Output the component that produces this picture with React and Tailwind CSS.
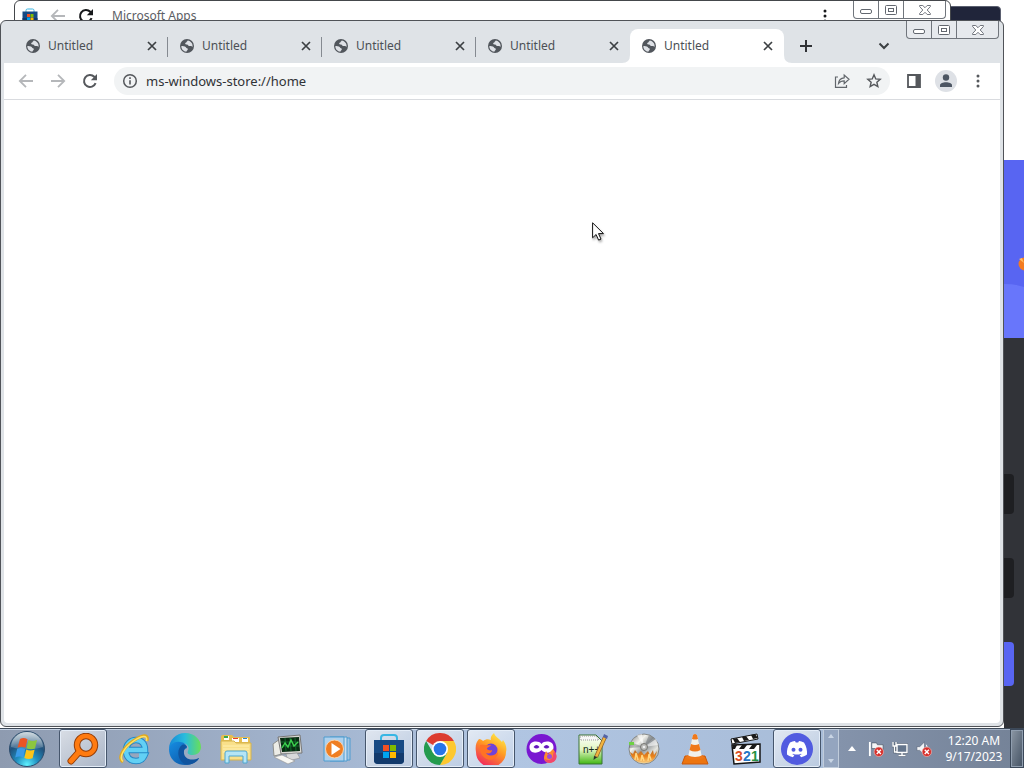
import React from "react";

const tabs = [1, 2, 3, 4, 5];

function Globe() {
  return (
    <svg viewBox="0 0 16 16" className="size-4 shrink-0" aria-hidden="true">
      <circle cx="8" cy="8" r="7" fill="#51565c" />
      <path d="M2.3 8.2c1.2-.2 2.6 0 3.6.4 1.4.5 1 1.6 2.1 1.7.9.1 1.1 1 .5 1.7-.7.8-1.1 1.1-1.2 1.7C4.5 13.4 2.3 11 2.3 8.2z" fill="#dee1e6" />
      <path d="M8.700 2.400c-.2 1-1.300 1.200-1.500 2.100-.1.700-1.100.5-1.100 1.300 0 .7 1 .6 1.900.7 1.200.1 1 1.400 2.200 1.600.9.1 1.600-.3 2.100 0 .5.300.8.700 1.300.6.3-3.200-1.700-5.700-4.900-6.300z" fill="#dee1e6" />
    </svg>
  );
}

function Arrow({ flip }) {
  return (
    <svg viewBox="0 0 16 16" className={flip ? "size-4 rotate-180" : "size-4"} fill="none" stroke="#b5b7ba" strokeWidth="1.8" aria-hidden="true">
      <path d="M15 8H2M8 1.8 1.8 8 8 14.2" />
    </svg>
  );
}

function Reload({ color }) {
  return (
    <svg viewBox="0 0 16 16" className="size-4" aria-hidden="true">
      <path d="M13.6 10.2A6 6 0 1 1 12.3 3.8L14 5.4" fill="none" stroke={color} strokeWidth="2" />
      <path d="M15 1v6.2H8.8z" fill={color} />
    </svg>
  );
}

function Dots({ color }) {
  return (
    <svg viewBox="0 0 16 16" className="size-4" fill={color} aria-hidden="true">
      <circle cx="8" cy="3" r="1.5" />
      <circle cx="8" cy="8" r="1.5" />
      <circle cx="8" cy="13" r="1.5" />
    </svg>
  );
}

function Cross() {
  return (
    <svg viewBox="0 0 10 10" className="size-2.5" stroke="#3c4043" strokeWidth="1.7" aria-hidden="true">
      <path d="m1 1 8 8M9 1 1 9" />
    </svg>
  );
}

function Caption({ tint }) {
  return (
    <div className={`flex h-[18px] shrink-0 divide-x divide-[#70757c] rounded-b border border-t-0 border-[#70757c] ${tint}`}>
      <button aria-label="Minimize" className="flex w-[25px] items-center justify-center pt-1">
        <svg viewBox="0 0 12 5" className="h-[5px] w-3" aria-hidden="true">
          <rect x=".5" y=".5" width="11" height="4" rx="1.5" fill="#fff" stroke="#62676f" />
        </svg>
      </button>
      <button aria-label="Maximize" className="flex w-[25px] items-center justify-center">
        <svg viewBox="0 0 12 10" className="h-2.5 w-3" fill="#fff" stroke="#62676f" aria-hidden="true">
          <rect x=".5" y=".5" width="11" height="9" rx="1" />
          <rect x="3.5" y="3.5" width="5" height="3" />
        </svg>
      </button>
      <button aria-label="Close" className="flex w-[41px] items-center justify-center">
        <svg viewBox="0 0 12 10" className="h-2.5 w-3" fill="#fff" stroke="#62676f" strokeWidth=".9" aria-hidden="true">
          <path d="M.6.5h3.2L6 2.7 8.2.5h3.2v1L8.2 5l3.2 3.5v1H8.2L6 7.3 3.8 9.5H.6v-1L3.8 5 .6 1.5z" />
        </svg>
      </button>
    </div>
  );
}

function StoreIcon({ className }) {
  return (
    <svg viewBox="0 0 32 32" className={className} aria-hidden="true">
      <path d="M8 8V5q0-3 3-3h10q3 0 3 3v3" fill="none" stroke="#38b6e4" strokeWidth="2" />
      <path d="M1 7h30v20q0 4-4 4H5q-4 0-4-4z" fill="#174a84" />
      <path d="M1 20h30v7q0 4-4 4H5q-4 0-4-4z" fill="#123a6c" />
      <path d="M10 12h6v6h-6z" fill="#f25022" />
      <path d="M17 12h6v6h-6z" fill="#7fba00" />
      <path d="M10 19h6v6h-6z" fill="#00a4ef" />
      <path d="M17 19h6v6h-6z" fill="#ffb900" />
    </svg>
  );
}

function StartOrb() {
  return (
    <svg viewBox="0 0 40 40" className="size-10" aria-hidden="true">
      <defs>
        <radialGradient id="orb" cx=".5" cy=".95" r=".9">
          <stop offset="0" stopColor="#5ff2ff" />
          <stop offset=".35" stopColor="#218fc0" />
          <stop offset=".7" stopColor="#20527d" />
          <stop offset="1" stopColor="#5d8097" />
        </radialGradient>
        <linearGradient id="orbShine" x2="0" y2="1">
          <stop offset="0" stopColor="#fff" stopOpacity=".7" />
          <stop offset="1" stopColor="#fff" stopOpacity=".15" />
        </linearGradient>
      </defs>
      <circle cx="20" cy="20" r="17.5" fill="url(#orb)" stroke="#2c4c6d" />
      <path d="M4 18a16 15 0 0 1 32 0c-9 3-22 3-32 0z" fill="url(#orbShine)" />
      <path d="M13 10c3-1.500 5-1 7.500.3l-2 8.500c-3-1.400-5-1.500-8-.1z" fill="#ea5524" />
      <path d="M21.500 11c2.500 1.200 5 1.300 8.500 0l-2 8.500c-3 1.200-5.500 1-8.500-.2z" fill="#8cc63f" />
      <path d="M10.200 19.800c2.600-1.300 5-1.100 8 .2l-2 8.500c-2.500-1.300-5-1.300-8 0z" fill="#3a9be8" />
      <path d="M19.300 20.500c2.500 1.200 5 1.300 8.300.2l-2 8.500c-3 1.100-5.500 1-8.300-.3z" fill="#fcc419" />
    </svg>
  );
}

function SearchIcon() {
  return (
    <svg viewBox="0 0 32 32" className="size-8" fill="none" aria-hidden="true">
      <circle cx="19" cy="12" r="9" stroke="#933d08" strokeWidth="6.500" />
      <path d="m12 19-8 9" stroke="#933d08" strokeWidth="7" strokeLinecap="round" />
      <circle cx="19" cy="12" r="9" stroke="#ff7b10" strokeWidth="4.500" />
      <path d="m12 19-8 9" stroke="#ff7b10" strokeWidth="5" strokeLinecap="round" />
    </svg>
  );
}

function ExplorerE() {
  return (
    <svg viewBox="0 0 32 32" className="size-8" fill="none" aria-hidden="true">
      <path d="M9 17h18c0-7-4-10-9-10S8 11 8 17.500 12 28 18 28c4 0 7-2 8.500-5.500H21" stroke="#2588c6" strokeWidth="6.500" />
      <path d="M9 17h18c0-7-4-10-9-10S8 11 8 17.500 12 28 18 28c4 0 7-2 8.500-5.500H21" stroke="#62d0f4" strokeWidth="4.500" />
      <path d="M5 29C-1 25 6 14 15 8S31 0 29 8" stroke="#e3a91d" strokeWidth="3" />
      <path d="M5 28.500C0 24 7 14 15 8.500S30 1 28.500 8" stroke="#fbe36b" strokeWidth="1.500" />
    </svg>
  );
}

function EdgeIcon() {
  return (
    <svg viewBox="0 0 32 32" className="size-8" aria-hidden="true">
      <defs>
        <linearGradient id="edgeTop"><stop stopColor="#1688d8" /><stop offset=".5" stopColor="#29bcdd" /><stop offset="1" stopColor="#69df59" /></linearGradient>
        <linearGradient id="edgeBase" x2="1" y2="1"><stop stopColor="#168de2" /><stop offset="1" stopColor="#0b4d9c" /></linearGradient>
      </defs>
      <path d="M0 16C0 7 7 0 16 0c10 0 16 7 16 14 0 5-4 8-8 8-5 0-6-2-5-4 2-4-1-8-6-8C6 10 1 13 0 16z" fill="url(#edgeTop)" />
      <path d="M0 16c1-5 6-8 11-7 4 0 7 3 7 6-5 1-5 9 1 12 4 2 8 0 11-2-3 5-8 7-14 7C6 32 0 25 0 16z" fill="url(#edgeBase)" />
      <path d="M13 12c-6 4-5 17 5 19.800C27 31 30 26 30 25c-9 4-16 0-15-7 0-2 1-3 3-4-1-2-3-3-5-2z" fill="#10549f" />
    </svg>
  );
}

function FolderIcon() {
  return (
    <svg viewBox="0 0 32 32" className="size-8" aria-hidden="true">
      <path d="M1 4q0-2 2-2h9l2 2h16v7H1z" fill="#e6bd50" />
      <path d="M4 3h5v4H4zM12 5h7v4h-7zM22 5h6v4h-6z" fill="#fff" />
      <path d="M4 3h4v2H4z" fill="#38a64b" /><path d="M13 5h5v1h-5z" fill="#e23c2e" /><path d="M23 5h4v1h-4z" fill="#2c87cc" />
      <path d="M1 8h13l2 2h15v17H1z" fill="#f9e08a" stroke="#d5b34d" />
      <path d="M3 13h26M3 16h26M3 19h26" stroke="#fff1b1" />
      <path d="M5 30V20q0-2 2-2h18q2 0 2 2v10h-4v-7H9v7z" fill="#b5e5f5" stroke="#4ea6d0" />
    </svg>
  );
}

function MonitorIcon() {
  return (
    <svg viewBox="0 0 32 32" className="size-8" aria-hidden="true">
      <path d="m2 11 7-5 2 15-8 2z" fill="#ecece6" stroke="#8d8f8b" />
      <path d="m7 4 22-2 2 18-21 1z" fill="#d8d8d3" stroke="#777" />
      <path d="m9 5 19-1 1 14-18 1z" fill="#092d13" />
      <path d="M10 9h18M10 13h18M14 5l1 13M19 5l1 13M24 5l1 13" stroke="#177733" strokeWidth=".8" />
      <path d="m11 15 3-5 3 4 3-7 3 6 4-4" fill="none" stroke="#3cd24e" strokeWidth="1.400" />
      <path d="m15 21 11-1 3 5-12 3z" fill="#d7d9da" stroke="#8d8f91" strokeWidth=".6" />
      <path d="m3 24 8-2 13 6-7 3z" fill="#f7f7f3" stroke="#999" strokeWidth=".7" />
    </svg>
  );
}

function MediaIcon() {
  return (
    <svg viewBox="0 0 32 32" className="size-8" aria-hidden="true">
      <path d="M12 5h16v22H12z" fill="#9fc4e3" stroke="#4f9ccf" />
      <path d="M8 4h17v24H8z" fill="#c9def0" stroke="#4f9ccf" />
      <path d="M2 4h20v24H2z" fill="#aed1ed" stroke="#4f9ccf" />
      <circle cx="12.500" cy="16" r="9" fill="#ef7e22" stroke="#f9d3ae" />
      <path d="M9.500 10v12l9-6z" fill="#fff" />
    </svg>
  );
}

function ChromeIcon() {
  return (
    <svg viewBox="0 0 32 32" className="size-8" aria-hidden="true">
      <path d="M16 16 2.140 8A16 16 0 0 1 29.860 8z" fill="#dc3c30" />
      <path d="M16 16V8h13.860A16 16 0 0 1 16 32l7-12z" fill="#fdc82f" />
      <path d="M16 16l-6.900 4L2.140 8A16 16 0 0 0 16 32l7-12z" fill="#249b4d" />
      <circle cx="16" cy="16" r="8" fill="#fff" /><circle cx="16" cy="16" r="6.300" fill="#2875e8" />
    </svg>
  );
}

function FirefoxIcon() {
  return (
    <svg viewBox="0 0 32 32" className="size-8" aria-hidden="true">
      <defs><linearGradient id="fox" x1=".8" y1="0" x2=".25" y2="1"><stop stopColor="#fff04a" /><stop offset=".45" stopColor="#ff9a22" /><stop offset="1" stopColor="#f0215f" /></linearGradient></defs>
      <path d="M4 6c2 0 3 1 4 2 3-2 5-2 8-1-1-3 1-5 3-7 1 4 5 5 8 9l1-2c3 4 4 8 3 12a15 15 0 0 1-30 0C0 14 1 9 4 6z" fill="url(#fox)" />
      <circle cx="16" cy="17" r="6.500" fill="#7042d8" />
      <path d="M5 12c4-1 6 1 11 0-1 2-4 2-4 4 1 1 3 2 5 1 0 3-3 4-6 3 3 4 9 3 12-1 0 7-8 10-13 6-4-3-6-8-5-13z" fill="#ff7224" />
    </svg>
  );
}

function MaskIcon() {
  return (
    <svg viewBox="0 0 32 32" className="size-8" aria-hidden="true">
      <circle cx="15.500" cy="16" r="15" fill="#7917d1" />
      <path d="M15.500 11c3-4 12-3 12 3 0 7-8 7-12 3-4 4-12 4-12-3 0-6 9-7 12-3z" fill="#fff" />
      <path d="M7.500 14q3-4 6 0-3 3-6 0m10 0q3-4 6 0-3 3-6 0" fill="#6518bd" />
      <path d="M20 18l2 3 5-5c3 4 4 6 3 9-2 7-12 6-12 0 0-3 1-4 2-7z" fill="#ff8a30" />
      <path d="M28 18c5 5 2 12-4 12-3 0-5-2-5-4 3 2 8 1 8-4z" fill="#f2476f" /><circle cx="23.500" cy="23.500" r="2.500" fill="#a34bd3" />
    </svg>
  );
}

function NotepadIcon() {
  return (
    <svg viewBox="0 0 32 32" className="size-8" aria-hidden="true">
      <defs><linearGradient id="note" x2="0" y2="1"><stop stopColor="#fff" /><stop offset=".5" stopColor="#e1f5c1" /><stop offset="1" stopColor="#42b714" /></linearGradient></defs>
      <path d="M2 2h17l6 6v23H2z" fill="url(#note)" stroke="#397334" />
      <path d="M3 3h16l3 4H3z" fill="#f7f7f7" stroke="#999" strokeDasharray="1 1" />
      <text x="6" y="20" fontFamily="Liberation Sans, sans-serif" fontSize="10" fill="#142c1b">n++</text>
      <path d="M28 4 19 24" stroke="#8e612d" strokeWidth="4" /><path d="M28 4 19 24" stroke="#f1b43f" strokeWidth="2.500" />
      <path d="m27 1 4 2-1 3-4-2z" fill="#5363a6" /><path d="m17 23-.5 4 4-3z" fill="#293328" />
    </svg>
  );
}

function DiscIcon() {
  return (
    <svg viewBox="0 0 32 32" className="size-8" aria-hidden="true">
      <defs>
        <linearGradient id="disc" x2="1" y2="1"><stop stopColor="#777" /><stop offset=".3" stopColor="#f2f2ec" /><stop offset=".5" stopColor="#91969a" /><stop offset=".7" stopColor="#e5e5df" /><stop offset="1" stopColor="#7e7662" /></linearGradient>
        <linearGradient id="flame" x2="0" y2="1"><stop stopColor="#b86b28" /><stop offset=".5" stopColor="#ec831a" /><stop offset="1" stopColor="#f7cf83" /></linearGradient>
      </defs>
      <circle cx="16" cy="16" r="15" fill="url(#disc)" stroke="#858989" />
      <path d="m16 14-7-12 5-1zM16 14 28 6l2 6z" fill="#fff" opacity=".6" />
      <path d="m16 14-15 1 1-6zM16 14l5-12 5 3z" fill="#5d6266" opacity=".4" />
      <path d="M2 19l3 2 2-4 3 4 3-3 3 4 4-4 2 4 3-5 1 5 3-4C27 27 24 30 16 30S4 26 2 19z" fill="url(#flame)" />
      <path d="m7 27 1-7 2 7m3 1 1-6 2 6m4 0 1-7 2 6" fill="none" stroke="#ffd681" strokeWidth="1.500" />
      <circle cx="16" cy="14" r="3.500" fill="#b9bab7" stroke="#777672" /><circle cx="16" cy="14" r="1.300" fill="#eee" />
      <path d="M1 9h5v3H1z" fill="#6ed143" />
    </svg>
  );
}

function ConeIcon() {
  return (
    <svg viewBox="0 0 32 32" className="size-8" aria-hidden="true">
      <path d="M6 23h20l3 8H3z" fill="#ed750f" stroke="#c9590d" />
      <path d="M14 2q2-2 4 0l5 22q-7 4-14 0z" fill="#f1f0eb" />
      <path d="M14 2q2-2 4 0l1 4q-3 1-6 0zM12 11q4 2 8 0l1.500 6q-5.500 3-11 0zM8 22q8 4 16 0l1 3q-9 4-18 0z" fill="#ef781a" />
    </svg>
  );
}

function ClapperIcon() {
  return (
    <svg viewBox="0 0 32 32" className="size-8" aria-hidden="true">
      <path d="m1 6 26-5 1 5L2 11z" fill="#fff" stroke="#151515" />
      <path d="m3 6 4-1 3 4-5 1zm9-2 4-1 3 4-5 1zm9-2 4-1 3 4-5 1z" fill="#191919" />
      <path d="m2 12 28-1v18L4 31z" fill="#fff" stroke="#151515" strokeWidth="1.500" />
      <path d="m3 12 4 0-2 4H3zm9 0h5l-3 4h-5zm10 0h5l-3 4h-5z" fill="#191919" />
      <g fontFamily="Liberation Sans, sans-serif" fontWeight="700" fontSize="14">
        <text x="5" y="28" fill="#dc4f24">3</text><text x="13" y="28" fill="#2475c5">2</text><text x="21" y="28" fill="#259245">1</text>
      </g>
    </svg>
  );
}

function DiscordIcon() {
  return (
    <svg viewBox="0 0 32 32" className="size-8" aria-hidden="true">
      <circle cx="16" cy="16" r="16" fill="#515be0" />
      <path d="M9 9.500c2-1 3-1.400 5-1.600l.8 1.500h2.400l.8-1.500c2 .2 3 .6 5 1.600 2.500 4 3.300 8 3 12-2 1.500-4 2.300-6 2.800l-1.400-2.200q1-.3 2-.9l-.6-.5q-4 1.700-8 0l-.6.500q1 .6 2 .9L12 24.300c-2-.5-4-1.300-6-2.800-.3-4 .5-8 3-12z" fill="#fff" />
      <circle cx="12.500" cy="16.800" r="2" fill="#515be0" /><circle cx="19.500" cy="16.800" r="2" fill="#515be0" />
    </svg>
  );
}

const apps = [
  { name: "Search", Icon: SearchIcon, open: true },
  { name: "Internet Explorer", Icon: ExplorerE },
  { name: "Edge", Icon: EdgeIcon },
  { name: "Files", Icon: FolderIcon },
  { name: "System monitor", Icon: MonitorIcon },
  { name: "Media player", Icon: MediaIcon },
  { name: "Store", Icon: () => <StoreIcon className="size-8" />, open: true },
  { name: "Chrome", Icon: ChromeIcon, open: true },
  { name: "Firefox", Icon: FirefoxIcon, open: true },
  { name: "Private browser", Icon: MaskIcon },
  { name: "Notepad++", Icon: NotepadIcon },
  { name: "Disc burner", Icon: DiscIcon },
  { name: "VLC", Icon: ConeIcon },
  { name: "Media player classic", Icon: ClapperIcon },
  { name: "Discord", Icon: DiscordIcon, open: true },
];

function StoreWindow() {
  return (
    <section className="absolute top-0 right-[73px] left-3.5 h-40 rounded-t-md border border-[#44474b] bg-white">
      <div className="flex items-start">
        <div className="flex h-[30px] flex-1 items-center pl-[7px]">
          <StoreIcon className="size-4" />
          <button aria-label="Back" className="ml-3 flex size-4"><Arrow /></button>
          <button aria-label="Reload" className="ml-3 flex size-4"><Reload color="#17191b" /></button>
          <span className="ml-[18px] text-[12px] leading-4 text-[#5c6065]">Microsoft Apps</span>
        </div>
        <button aria-label="Menu" className="mt-[7px] mr-5 flex size-4"><Dots color="#17191b" /></button>
        <div className="mr-1"><Caption tint="bg-white" /></div>
      </div>
    </section>
  );
}

function Tab({ active, divided }) {
  return (
    <div className={`relative flex h-[34px] w-[154px] items-center pl-[11px] ${active ? "rounded-t-lg bg-white" : ""}`}>
      {divided && <span className="absolute top-2 right-0 h-5 w-px bg-[#858a91]" />}
      {active && (
        <>
          <svg viewBox="0 0 8 8" className="absolute bottom-0 -left-2 size-2" aria-hidden="true"><path d="M8 0v8H0q8 0 8-8" fill="#fff" /></svg>
          <svg viewBox="0 0 8 8" className="absolute -right-2 bottom-0 size-2" aria-hidden="true"><path d="M0 0v8h8Q0 8 0 0" fill="#fff" /></svg>
        </>
      )}
      <Globe />
      <button className="ml-[7px] flex-1 text-left text-[12px] leading-4 text-[#4c5055]">Untitled</button>
      <button aria-label="Close tab" className="mr-2 flex size-4 items-center justify-center"><Cross /></button>
    </div>
  );
}

function BrowserWindow() {
  return (
    <section className="absolute top-5 right-5 bottom-px left-0 flex flex-col rounded-md border border-[#505358] bg-[#dfe3e7] px-[3px] pb-[3px]">
      <header className="flex h-[42px] items-start">
        <div className="flex self-end pl-2.5">
          {tabs.map((id, i) => <Tab key={id} active={i === 4} divided={i < 3} />)}
        </div>
        <button aria-label="New tab" className="mb-[9px] ml-3.5 flex size-4 items-center justify-center self-end">
          <svg viewBox="0 0 12 12" className="size-3" stroke="#303236" strokeWidth="2" aria-hidden="true"><path d="M6 0v12M0 6h12" /></svg>
        </button>
        <div className="flex-1" />
        <button aria-label="Search tabs" className="mr-3.5 mb-[9px] flex size-4 items-center justify-center self-end">
          <svg viewBox="0 0 12 12" className="size-3" fill="none" stroke="#3c4043" strokeWidth="2" aria-hidden="true"><path d="m1.500 3.500 4.500 4.500 4.500-4.500" /></svg>
        </button>
        <div className="mr-px"><Caption tint="bg-[#e6e9ed]" /></div>
      </header>
      <div className="flex h-[37px] items-center border-b border-[#d9dbdf] bg-white px-1.5">
        <button aria-label="Back" className="flex size-8 items-center justify-center"><Arrow /></button>
        <button aria-label="Forward" className="flex size-8 items-center justify-center"><Arrow flip /></button>
        <button aria-label="Reload" className="flex size-8 items-center justify-center"><Reload color="#55585c" /></button>
        <div className="ml-2 flex h-7 flex-1 items-center rounded-full bg-[#f1f3f4]">
          <button aria-label="Site information" className="flex w-8 justify-center">
            <svg viewBox="0 0 16 16" className="size-4" aria-hidden="true"><circle cx="8" cy="8" r="6.300" fill="none" stroke="#55585c" strokeWidth="1.500" /><path d="M7.200 7.200h1.600v4.300H7.200zM7.200 4.300h1.600v1.700H7.200z" fill="#55585c" /></svg>
          </button>
          <input aria-label="Address" defaultValue="ms-windows-store://home" className="min-w-0 flex-1 bg-transparent text-[13px] leading-5 text-[#303236] outline-none" />
          <button aria-label="Share" className="flex w-8 justify-center">
            <svg viewBox="0 0 16 16" className="size-4" fill="none" stroke="#62666b" strokeWidth="1.200" aria-hidden="true"><path d="M4 4H1.500v10.300h11V12M4.500 10.500c.3-3.500 2.500-5.500 5.700-5.700V2l4.800 4.300-4.800 4.300V7.800c-2.600 0-4.400.9-5.700 2.700z" /></svg>
          </button>
          <button aria-label="Bookmark" className="flex w-8 justify-center">
            <svg viewBox="0 0 16 16" className="size-4" fill="none" stroke="#55585c" strokeWidth="1.400" aria-hidden="true"><path d="m8 1.800 1.750 4.100 4.450.4-3.350 2.950 1 4.350L8 11.300l-3.850 2.300 1-4.350L1.800 6.300l4.450-.4z" /></svg>
          </button>
        </div>
        <button aria-label="Side panel" className="ml-2 flex w-8 justify-center">
          <svg viewBox="0 0 16 16" className="size-4" aria-hidden="true"><path d="M2 2h12v12H2z" fill="none" stroke="#55585c" strokeWidth="1.800" /><path d="M9.500 2H14v12H9.500z" fill="#55585c" /></svg>
        </button>
        <button aria-label="Profile" className="flex w-8 justify-center">
          <svg viewBox="0 0 22 22" className="size-[22px]" aria-hidden="true"><circle cx="11" cy="11" r="11" fill="#dee1e6" /><circle cx="11" cy="7.500" r="3.200" fill="#4d5663" /><path d="M5 17v-1.700c0-4 12-4 12 0V17z" fill="#4d5663" /></svg>
        </button>
        <button aria-label="Menu" className="flex w-8 justify-center"><Dots color="#55585c" /></button>
      </div>
      <main className="flex-1 rounded-b-sm bg-white" />
    </section>
  );
}

function DiscordPage() {
  return (
    <aside className="absolute inset-y-0 right-0 flex w-5 flex-col bg-[#313338]">
      <div className="h-40 bg-white" />
      <svg viewBox="0 0 20 178" className="h-[178px] w-5" aria-hidden="true">
        <path d="M0 0h20v178H0z" fill="#5865f2" /><path d="M0 124q12 0 20 3v51H0z" fill="#6876fb" />
        <circle cx="21" cy="104" r="6.500" fill="#f47b20" /><path d="m15 99 5 4-2-5z" fill="#ffbd61" />
      </svg>
      <div className="mt-[136px] mr-2.5 h-10 rounded-r bg-[#1e1f22]" />
      <div className="mt-11 mr-2.5 h-10 rounded-r bg-[#1e1f22]" />
      <div className="mt-11 mr-2.5 h-11 rounded-r bg-[#5865f2]" />
    </aside>
  );
}

function Badge() {
  return (
    <g>
      <circle cx="11.500" cy="11.500" r="5" fill="#d72f2b" stroke="#f2bab5" strokeWidth=".7" />
      <path d="m9.300 9.300 4.400 4.400m0-4.400-4.400 4.400" stroke="#fff" strokeWidth="1.500" />
    </g>
  );
}

function Taskbar() {
  return (
    <footer className="flex h-10 shrink-0 items-stretch border-t border-[#3d4958] bg-linear-to-r from-[#8e9bb0] via-[#b0c5e2] to-[#a3b7d2] shadow-[inset_0_1px_0_#c5d2e3]">
      <button aria-label="Start" className="flex w-[59px] items-center pl-[7px]"><StartOrb /></button>
      <nav className="flex gap-[3px]">
        {apps.map(({ name, Icon, open }) => (
          <button key={name} aria-label={name} className={`flex w-12 items-center justify-center rounded-[3px] border ${open ? "border-[#46566c] bg-linear-to-br from-white/65 to-white/20 shadow-[inset_0_0_0_1px_#e4edf8]" : "border-transparent"}`}>
            <Icon />
          </button>
        ))}
      </nav>
      <button aria-label="Scroll applications" className="ml-0.5 flex w-4 flex-col items-center justify-between border border-[#c0ccdb] bg-[#94a5bf] py-1">
        <svg viewBox="0 0 6 4" className="h-1 w-1.5" aria-hidden="true"><path d="M0 4h6L3 0z" fill="#c9d5e4" /></svg>
        <svg viewBox="0 0 6 4" className="h-1 w-1.5" aria-hidden="true"><path d="M0 0h6L3 4z" fill="#c9d5e4" /></svg>
      </button>
      <div className="flex flex-1 bg-linear-to-r from-[#8493ab] to-[#748297] shadow-[inset_0_1px_0_#a4b2c5]">
        <div className="flex flex-1 items-center justify-end gap-2 pr-1.5">
          <button aria-label="Show hidden icons"><svg viewBox="0 0 8 5" className="h-[5px] w-2" aria-hidden="true"><path d="M0 5h8L4 0z" fill="#fff" /></svg></button>
          <button aria-label="Action center" className="ml-1"><svg viewBox="0 0 17 17" className="size-4" aria-hidden="true"><path d="M2 1v15" stroke="#fff" strokeWidth="2" /><path d="M4 2h5l1 2h6v6H9L8 8H4z" fill="#f4f6f8" stroke="#3d4958" strokeWidth=".6" /><Badge /></svg></button>
          <button aria-label="Network"><svg viewBox="0 0 16 16" className="size-4" fill="none" aria-hidden="true"><path d="M5 3.500h10v8H5zM10 12v2M6.500 14.500h7M1 1v4h3V1M2.500 5v6H5" stroke="#4b586a" strokeWidth="2.500" /><path d="M5 3.500h10v8H5z" fill="#64758c" /><path d="M5 3.500h10v8H5zM10 12v2M6.500 14.500h7M1 1v4h3V1M2.500 5v6H5" stroke="#fff" strokeWidth="1.400" /></svg></button>
          <button aria-label="Volume muted"><svg viewBox="0 0 17 17" className="size-4" aria-hidden="true"><path d="M1 6h3l5-5v14l-5-5H1z" fill="#f3f5f7" stroke="#536176" strokeWidth=".6" /><path d="M11 4q2 3 0 7" fill="none" stroke="#fff" /><Badge /></svg></button>
        </div>
        <div className="flex w-[72px] flex-col justify-center text-center text-[12px] leading-4 whitespace-nowrap text-white">
          <time>12:20 AM</time><time>9/17/2023</time>
        </div>
        <button aria-label="Show desktop" className="w-3.5 border border-[#3b4859] bg-linear-to-br from-[#8d98a5] to-[#445263] shadow-[inset_0_0_0_1px_#909eaf]" />
      </div>
    </footer>
  );
}

export default function App() {
  return (
    <div className="flex min-h-screen flex-col bg-white font-['Noto_Sans',sans-serif]">
      <div className="relative flex-1 overflow-hidden">
        <DiscordPage />
        <div className="absolute top-1.5 right-[23px] h-10 w-36 rounded-t border border-[#5b6070] bg-[#20253a]" />
        <StoreWindow />
        <BrowserWindow />
        <svg viewBox="0 0 14 20" className="absolute top-[222px] left-[592px] h-5 w-3.5 drop-shadow-[1px_2px_1px_#0005]" aria-hidden="true">
          <path d="M.6.800v15l3.500-3.300 2.500 5.600 2.400-1-2.500-5.500h5z" fill="#fff" stroke="#111" />
        </svg>
      </div>
      <Taskbar />
    </div>
  );
}
